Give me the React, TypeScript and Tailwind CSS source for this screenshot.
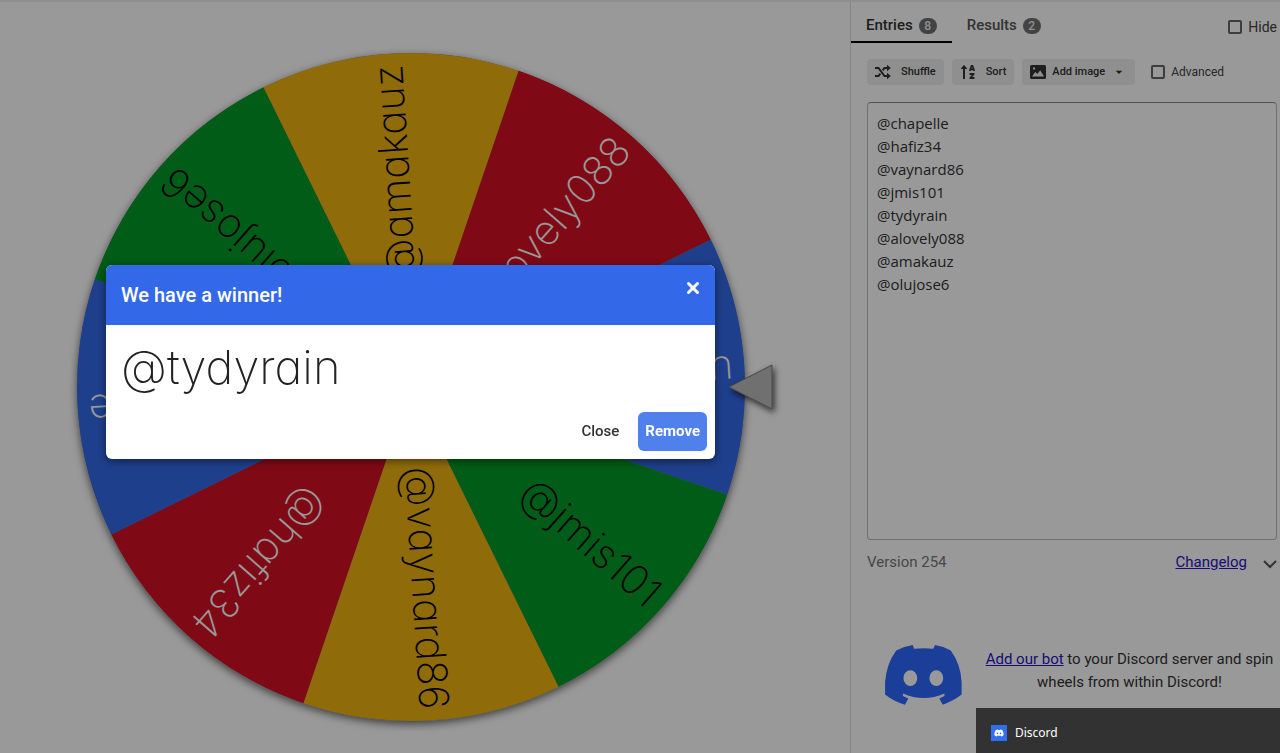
import React, { useState } from "react";
import { X } from "lucide-react";
import { FaSortAlphaUp } from "react-icons/fa";
import { FaDiscord } from "react-icons/fa6";
import { MdArrowDropDown } from "react-icons/md";

const NAMES = [
  "@chapelle",
  "@hafiz34",
  "@vaynard86",
  "@jmis101",
  "@tydyrain",
  "@alovely088",
  "@amakauz",
  "@olujose6",
];

// Slices in clockwise order, starting next to the pointer
const SLICES = [
  { name: "@tydyrain", fill: "#3369e8", text: "#ffffff" },
  { name: "@jmis101", fill: "#009925", text: "#000000" },
  { name: "@vaynard86", fill: "#eeb211", text: "#000000" },
  { name: "@hafiz34", fill: "#d50f25", text: "#ffffff" },
  { name: "@chapelle", fill: "#3369e8", text: "#ffffff" },
  { name: "@olujose6", fill: "#009925", text: "#000000" },
  { name: "@amakauz", fill: "#eeb211", text: "#000000" },
  { name: "@alovely088", fill: "#d50f25", text: "#ffffff" },
];

const RADIUS = 334;
const ROTATION = -3.7;

const slicePath = () => {
  const a = (22.5 * Math.PI) / 180;
  const x = RADIUS * Math.cos(a);
  const y = RADIUS * Math.sin(a);
  return `M0 0 L${x} ${-y} A${RADIUS} ${RADIUS} 0 0 1 ${x} ${y} Z`;
};

const ShuffleIcon = () => (
  <svg viewBox="0 0 16 16" className="size-4" fill="none" stroke="currentColor" strokeWidth="2" aria-hidden="true">
    <path d="M0 4h3.5l6 8H13M0 12h3.5l1.8-2.4M7.7 6.4 9.5 4H13" />
    <path d="M12 .8 15.8 4 12 7.2ZM12 8.8l3.8 3.2-3.8 3.2Z" fill="currentColor" stroke="none" />
  </svg>
);

const ImageIcon = () => (
  <svg viewBox="0 0 16 14" className="h-3.5 w-4" aria-hidden="true">
    <path
      fill="currentColor"
      fillRule="evenodd"
      d="M1.5 0h13A1.5 1.5 0 0 1 16 1.5v11a1.5 1.5 0 0 1-1.5 1.5h-13A1.5 1.5 0 0 1 0 12.5v-11A1.5 1.5 0 0 1 1.5 0ZM2 11.5h12L10.2 5.2 7.4 9 5.2 7ZM3 2.5v2h2v-2Z"
    />
  </svg>
);

const ChevronIcon = () => (
  <svg viewBox="0 0 14 9" className="h-[9px] w-3.5" fill="none" stroke="currentColor" strokeWidth="2" aria-hidden="true">
    <path d="m1 1 6 6 6-6" />
  </svg>
);

const DiscordLogo = () => (
  <svg viewBox="18 16 228 178" className="h-[60px] w-[77px] shrink-0 text-[#2d6aff]" role="img" aria-label="Discord logo">
    <path
      fill="currentColor"
      fillRule="evenodd"
      d="M100 16 L104 27 Q133 24 161 27 L166 16 Q192 20 213 32 Q243 74 245 125 V163 Q221 182 189 193 L179 175 L194 167 V160 Q133 187 71 160 V167 L87 175 L77 193 Q44 184 18 163 V125 Q22 72 51 32 Q74 20 100 16 Z
      M93 91 a20 23 0 1 0 0 47 a20 23 0 1 0 0 -47 Z
      M170 91 a20 23 0 1 0 0 47 a20 23 0 1 0 0 -47 Z"
    />
  </svg>
);

const Wheel: React.FC = () => (
  <svg
    viewBox="-350 -350 740 740"
    className="w-[740px] shrink-0"
    role="img"
    aria-label="Wheel of names"
  >
    <defs>
      <filter id="wheel-shadow" x="-10%" y="-10%" width="120%" height="120%">
        <feDropShadow dx="0" dy="3" stdDeviation="4" floodOpacity="0.6" />
      </filter>
      <filter id="pointer-shadow" x="-30%" y="-30%" width="160%" height="160%">
        <feDropShadow dx="2" dy="3" stdDeviation="3" floodOpacity="0.7" />
      </filter>
    </defs>
    <circle r={RADIUS} fill="#888888" filter="url(#wheel-shadow)" />
    {SLICES.map((slice, i) => (
      <g key={slice.name} transform={`rotate(${ROTATION + i * 45})`}>
        <path d={slicePath()} fill={slice.fill} />
        <text
          x={RADIUS - 11}
          y="12"
          textAnchor="end"
          fill={slice.text}
          className="font-['Inter',sans-serif] text-[41px] font-extralight [font-feature-settings:'cv11']"
        >
          {slice.name}
        </text>
      </g>
    ))}
    <path
      d="M318 0 L361 -22 V22 Z"
      fill="#bbbbbb"
      stroke="#777777"
      filter="url(#pointer-shadow)"
    />
  </svg>
);

const Badge: React.FC<{ count: number }> = ({ count }) => (
  <span className="flex h-4 w-[18px] items-center justify-center rounded-full bg-[#707070] text-xs font-medium text-[#eeeeee]">
    {count}
  </span>
);

const Checkbox: React.FC<{ label: string; className: string }> = ({ label, className }) => (
  <label className={`flex items-center text-[#444444] ${className}`}>
    <input
      type="checkbox"
      className="size-[14px] appearance-none rounded-xs border-2 border-[#666666] checked:bg-[#3369e8]"
    />
    {label}
  </label>
);

const toolButton = "flex h-[26px] items-center rounded bg-[#eeeeee] px-2 text-[11px] font-medium text-[#333333]";

const SidePanel: React.FC = () => {
  const [entries, setEntries] = useState(NAMES.join("\n"));

  return (
    <aside className="flex w-[430px] shrink-0 flex-col border-l border-[#dddddd]">
      <div className="flex h-[41px] items-stretch justify-between pr-[3px]">
        <div className="flex">
          <button className="flex items-center gap-1.5 border-b-2 border-black px-[15px] pt-2 text-[15px] font-medium text-[#333333]">
            Entries <Badge count={8} />
          </button>
          <button className="flex items-center gap-1.5 border-b-2 border-transparent px-[15px] pt-2 text-[15px] font-medium text-[#555555]">
            Results <Badge count={2} />
          </button>
        </div>
        <Checkbox label="Hide" className="gap-1.5 pt-2 text-sm" />
      </div>

      <div className="flex flex-col pt-4 pr-[3px] pl-4">
        <div className="flex items-center gap-2">
          <button className={`${toolButton} gap-2.5`}>
            <ShuffleIcon />
            Shuffle
          </button>
          <button className={`${toolButton} gap-2.5`}>
            <FaSortAlphaUp className="size-4" />
            Sort
          </button>
          <button className={`${toolButton} gap-1.5`}>
            <ImageIcon />
            Add image
            <MdArrowDropDown className="size-4" />
          </button>
          <Checkbox label="Advanced" className="ml-2 gap-1.5 text-xs" />
        </div>

        <textarea
          aria-label="Entries"
          value={entries}
          onChange={(e) => setEntries(e.target.value)}
          className="mt-[17px] h-[438px] resize-none rounded border border-[#bbbbbb] border-t-[#888888] px-[9px] py-[9px] font-['Open_Sans',sans-serif] text-[15px] leading-[23px] text-[#333333] outline-none"
        />

        <div className="mt-2.5 flex items-center text-[15px] leading-6">
          <span className="text-[#777777]">Version 254</span>
          <a href="#changelog" className="ml-auto text-[#2a14c8] underline">
            Changelog
          </a>
          <button aria-label="Expand" className="ml-4 pt-1 text-[#555555]">
            <ChevronIcon />
          </button>
        </div>
      </div>

      <div className="mt-[71px] flex items-center gap-5 pr-[3px] pl-[34px] text-[#333333]">
        <DiscordLogo />
        <p className="flex-1 pb-2 text-center text-[15px] leading-[23px]">
          <a href="#bot" className="text-[#2a14c8] underline">
            Add our bot
          </a>{" "}
          to your Discord server and spin wheels from within Discord!
        </p>
      </div>
    </aside>
  );
};

const WinnerDialog: React.FC = () => (
  <div className="fixed inset-0 flex items-center justify-center bg-black/40 pr-[459px] pb-[29px]">
    <div
      role="dialog"
      aria-labelledby="winner-title"
      className="w-[609px] overflow-hidden rounded-md bg-white shadow-[0_2px_8px_rgba(0,0,0,0.5)]"
    >
      <header className="flex h-[60px] items-start justify-between bg-[#3369e8] pr-[13px] pl-[15px] text-white">
        <h2 id="winner-title" className="pt-4 text-xl leading-7 font-medium">
          We have a winner!
        </h2>
        <button aria-label="Dismiss" className="pt-3.5">
          <X className="size-[18px]" strokeWidth={4} />
        </button>
      </header>
      <p className="px-[15px] pt-3 font-['Inter',sans-serif] text-[47px] leading-[60px] font-extralight text-[#222222] [font-feature-settings:'cv11']">
        @tydyrain
      </p>
      <footer className="flex justify-end gap-3 px-2 pt-[15px] pb-2 text-[15px] font-medium">
        <button className="h-[39px] px-[7px] text-[#333333]">Close</button>
        <button className="h-[39px] rounded-md bg-[#5080ec] px-[7px] font-bold text-white">Remove</button>
      </footer>
    </div>
  </div>
);

export default function App() {
  return (
    <div className="min-h-screen border-t-2 border-[#eeeeee] bg-white font-['Roboto',sans-serif]">
      <div className="flex">
        <main className="flex flex-1 justify-center overflow-hidden pt-[35px] pl-3">
          <Wheel />
        </main>
        <SidePanel />
      </div>
      <WinnerDialog />
      <div className="fixed right-0 bottom-0 flex h-[45px] w-[304px] items-center gap-2 bg-[#323232] px-[15px] pt-1 font-['Noto_Sans',sans-serif] text-xs text-white">
        <span className="flex size-4 items-center justify-center bg-[#2f6ff0]">
          <FaDiscord className="size-2.5" />
        </span>
        Discord
      </div>
    </div>
  );
}
